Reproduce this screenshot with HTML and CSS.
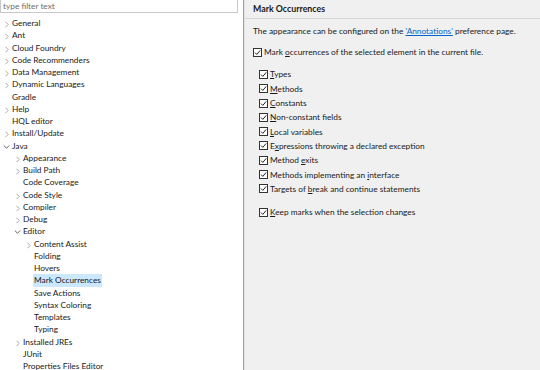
FILE: index.html
```html
<!DOCTYPE html>
<html lang="en">
<head>
    <meta charset="UTF-8">
    <title>Preferences - Mark Occurrences</title>
    <link rel="stylesheet" href="styles.css">
</head>
<body>
<div class="window">
    <div class="nav">
        <div class="filter">type filter text</div>
        <ul class="tree">
            <li class="l0"><span class="tw c"></span>General</li>
            <li class="l0"><span class="tw c"></span>Ant</li>
            <li class="l0"><span class="tw c"></span>Cloud Foundry</li>
            <li class="l0"><span class="tw c"></span>Code Recommenders</li>
            <li class="l0"><span class="tw c"></span>Data Management</li>
            <li class="l0"><span class="tw c"></span>Dynamic Languages</li>
            <li class="l0"><span class="tw"></span>Gradle</li>
            <li class="l0"><span class="tw c"></span>Help</li>
            <li class="l0"><span class="tw"></span>HQL editor</li>
            <li class="l0"><span class="tw c"></span>Install/Update</li>
            <li class="l0"><span class="tw o"></span>Java</li>
            <li class="l1"><span class="tw c"></span>Appearance</li>
            <li class="l1"><span class="tw c"></span>Build Path</li>
            <li class="l1"><span class="tw"></span>Code Coverage</li>
            <li class="l1"><span class="tw c"></span>Code Style</li>
            <li class="l1"><span class="tw c"></span>Compiler</li>
            <li class="l1"><span class="tw c"></span>Debug</li>
            <li class="l1"><span class="tw o"></span>Editor</li>
            <li class="l2"><span class="tw c"></span>Content Assist</li>
            <li class="l2"><span class="tw"></span>Folding</li>
            <li class="l2"><span class="tw"></span>Hovers</li>
            <li class="l2"><span class="tw"></span><span class="sel">Mark Occurrences</span></li>
            <li class="l2"><span class="tw"></span>Save Actions</li>
            <li class="l2"><span class="tw"></span>Syntax Coloring</li>
            <li class="l2"><span class="tw"></span>Templates</li>
            <li class="l2"><span class="tw"></span>Typing</li>
            <li class="l1"><span class="tw c"></span>Installed JREs</li>
            <li class="l1"><span class="tw"></span>JUnit</li>
            <li class="l1"><span class="tw"></span>Properties Files Editor</li>
        </ul>
    </div>
    <div class="page">
        <div class="title">Mark Occurrences</div>
        <div class="body">
            <p class="info">The appearance can be configured on the <a href="#">'Annotations'</a> preference page.</p>
            <label class="check"><span class="box"></span><span>Mark <u>o</u>ccurrences of the selected element in the current file.</span></label>
            <div class="group">
                <label class="check"><span class="box"></span><span><u>T</u>ypes</span></label>
                <label class="check"><span class="box"></span><span><u>M</u>ethods</span></label>
                <label class="check"><span class="box"></span><span><u>C</u>onstants</span></label>
                <label class="check"><span class="box"></span><span><u>N</u>on-constant fields</span></label>
                <label class="check"><span class="box"></span><span><u>L</u>ocal variables</span></label>
                <label class="check"><span class="box"></span><span>E<u>x</u>pressions throwing a declared exception</span></label>
                <label class="check"><span class="box"></span><span>Method <u>e</u>xits</span></label>
                <label class="check"><span class="box"></span><span>Methods implementing an <u>i</u>nterface</span></label>
                <label class="check"><span class="box"></span><span>Targets of <u>b</u>reak and continue statements</span></label>
                <label class="check gap"><span class="box"></span><span><u>K</u>eep marks when the selection changes</span></label>
            </div>
        </div>
    </div>
</div>
</body>
</html>
```

FILE: styles.css
```css
html, body {
    margin: 0;
    height: 100%;
}
body {
    font-family: Lato, "Noto Sans", sans-serif;
    font-size: 8.3px;
    color: #1a1a1a;
    overflow: hidden;
}
.window {
    display: flex;
    height: 370px;
}
.nav {
    width: 243px;
    background: #fff;
    border-right: 1px solid #a0a0a0;
    flex-shrink: 0;
}
.filter {
    width: 238px;
    height: 14px;
    line-height: 12px;
    margin-top: -1px;
    border: 1px solid #c8c8c8;
    padding-left: 2px;
    color: #6d6d6d;
    box-sizing: border-box;
}
.tree {
    list-style: none;
    margin: 4px 0 0;
    padding: 0;
}
.tree li {
    height: 12.25px;
    line-height: 12.25px;
    display: flex;
    align-items: center;
    white-space: nowrap;
}
.l0 { padding-left: 3px; }
.l1 { padding-left: 14px; }
.l2 { padding-left: 25px; }
.tw {
    width: 9px;
    height: 12px;
    flex-shrink: 0;
    background-repeat: no-repeat;
    background-position: 1px 4px;
}
.tw.c {
    background-image: url("data:image/svg+xml;utf8,<svg xmlns='http://www.w3.org/2000/svg' width='6' height='7'><path d='M1.5 0.8 L4.2 3.5 L1.5 6.2' fill='none' stroke='%23a8a8a8' stroke-width='1'/></svg>");
}
.tw.o {
    background-image: url("data:image/svg+xml;utf8,<svg xmlns='http://www.w3.org/2000/svg' width='7' height='6'><path d='M0.8 1.5 L3.5 4.2 L6.2 1.5' fill='none' stroke='%23606060' stroke-width='1'/></svg>");
    background-position: 0 4px;
}
.sel {
    background: #cce8ff;
    padding: 0 1px;
    margin-left: -1px;
}
.page {
    flex: 1;
    background: #f0f0f0;
    border-left: 1px solid #e3e3e3;
}
.title {
    font-weight: bold;
    font-size: 8.8px;
    height: 18px;
    line-height: 18px;
    padding-left: 8px;
    border-bottom: 1px solid #d5d5d5;
}
.body {
    padding: 5px 8px;
}
.info {
    margin: 0 0 7px;
    line-height: 14px;
    white-space: nowrap;
}
.info a {
    color: #0066cc;
}
.check {
    display: flex;
    align-items: center;
    height: 14.3px;
    white-space: nowrap;
}
.box {
    width: 9px;
    height: 9px;
    margin-right: 2px;
    flex-shrink: 0;
    background: url("data:image/svg+xml;utf8,<svg xmlns='http://www.w3.org/2000/svg' width='9' height='9'><rect x='0.5' y='0.5' width='8' height='8' fill='white' stroke='%23333'/><path d='M2 4.6 L3.8 6.4 L7.2 2.4' fill='none' stroke='%23222' stroke-width='1'/></svg>");
}
.group {
    margin-top: 8px;
    padding-left: 6px;
}
.gap {
    margin-top: 9px;
}
```
